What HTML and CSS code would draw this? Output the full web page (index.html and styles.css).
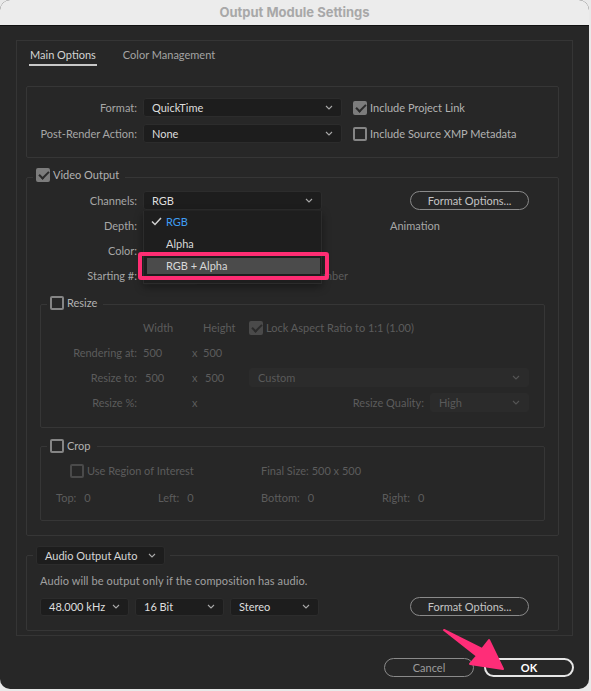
FILE: index.html
```html
<!DOCTYPE html>
<html lang="en">
<head>
  <meta charset="UTF-8">
  <title>Output Module Settings</title>
  <link rel="stylesheet" href="styles.css">
</head>
<body>
<div class="window">
  <div class="titlebar">Output Module Settings</div>
  <div class="content">
    <div class="panel">
      <div class="tabs">
        <span class="tab active">Main Options</span>
        <span class="tab">Color Management</span>
      </div>

      <!-- format -->
      <div class="box format-box">
        <span class="lbl">Format:</span>
        <div class="select">QuickTime<svg class="chev" width="8" height="5" viewBox="0 0 8 5"><path d="M1 1L4 4L7 1"/></svg></div>
        <label class="check"><span class="cb checked"></span>Include Project Link</label>
        <span class="lbl">Post-Render Action:</span>
        <div class="select">None<svg class="chev" width="8" height="5" viewBox="0 0 8 5"><path d="M1 1L4 4L7 1"/></svg></div>
        <label class="check"><span class="cb"></span>Include Source XMP Metadata</label>
      </div>

      <!-- video output -->
      <fieldset class="box video-box">
        <legend class="legend-lg"><label class="check"><span class="cb checked"></span>Video Output</label></legend>
        <div class="video-grid">
          <span class="lbl">Channels:</span>
          <div class="select">RGB<svg class="chev" width="8" height="5" viewBox="0 0 8 5"><path d="M1 1L4 4L7 1"/></svg></div>
          <div><button class="pill fmt-btn">Format Options...</button></div>

          <span class="lbl">Depth:</span>
          <div class="select"></div>
          <span class="codec">Animation</span>

          <span class="lbl">Color:</span>
          <div class="select"></div>
          <span></span>

          <span class="lbl">Starting #:</span>
          <div class="start-row">
            <span class="num-field"></span>
            <label class="check dim"><span class="cb checked"></span>Use Comp Frame Number</label>
          </div>
          <span></span>

          <div class="menu">
            <div class="item"><svg class="tick" width="11" height="9" viewBox="0 0 11 9"><path d="M1 4.5L4 7.5L10 1"/></svg><span class="sel">RGB</span></div>
            <div class="item">Alpha</div>
            <div class="item hover">RGB + Alpha</div>
          </div>
          <div class="mark"></div>
        </div>

        <fieldset class="box sub resize-box">
          <legend class="legend-sm"><label class="check"><span class="cb"></span>Resize</label></legend>
          <div class="resize-grid dim">
            <span></span><span>Width</span><span></span><span>Height</span>
            <label class="check"><span class="cb checked"></span>Lock Aspect Ratio to 1:1 (1.00)</label>

            <span class="lbl">Rendering at:</span><span>500</span><span>x</span><span>500</span><span></span>

            <span class="lbl">Resize to:</span><span class="pad">500</span><span>x</span><span class="pad">500</span>
            <div class="select off">Custom<svg class="chev" width="8" height="5" viewBox="0 0 8 5"><path d="M1 1L4 4L7 1"/></svg></div>

            <span class="lbl">Resize %:</span><span></span><span>x</span><span></span>
            <div class="quality">
              <span>Resize Quality:</span>
              <div class="select off q-select">High<svg class="chev" width="8" height="5" viewBox="0 0 8 5"><path d="M1 1L4 4L7 1"/></svg></div>
            </div>
          </div>
        </fieldset>

        <fieldset class="box sub crop-box">
          <legend class="legend-xs"><label class="check"><span class="cb"></span>Crop</label></legend>
          <div class="crop-grid dim">
            <label class="check roi"><span class="cb"></span>Use Region of Interest</label>
            <span class="final">Final Size: 500 x 500</span>
            <span>Top:<b>0</b></span>
            <span>Left:<b>0</b></span>
            <span>Bottom:<b>0</b></span>
            <span>Right:<b>0</b></span>
          </div>
        </fieldset>
      </fieldset>

      <!-- audio -->
      <fieldset class="box audio-box">
        <legend class="legend-audio">
          <div class="select audio-mode">Audio Output Auto<svg class="chev" width="8" height="5" viewBox="0 0 8 5"><path d="M1 1L4 4L7 1"/></svg></div>
        </legend>
        <p class="note">Audio will be output only if the composition has audio.</p>
        <div class="audio-row">
          <div class="select small">48.000 kHz<svg class="chev" width="8" height="5" viewBox="0 0 8 5"><path d="M1 1L4 4L7 1"/></svg></div>
          <div class="select small">16 Bit<svg class="chev" width="8" height="5" viewBox="0 0 8 5"><path d="M1 1L4 4L7 1"/></svg></div>
          <div class="select small">Stereo<svg class="chev" width="8" height="5" viewBox="0 0 8 5"><path d="M1 1L4 4L7 1"/></svg></div>
          <button class="pill fmt-btn audio-fmt">Format Options...</button>
        </div>
      </fieldset>
    </div>

    <div class="buttons">
      <button class="pill cancel">Cancel</button>
      <button class="pill ok">OK</button>
    </div>
  </div>

  <!-- annotation arrow -->
  <svg class="arrow" width="591" height="691" viewBox="0 0 591 691">
    <polygon points="444,630 482,649 489,640 503,669 470,664 477,656" fill="#ff2d78" stroke="#ff2d78" stroke-width="2" stroke-linejoin="round"/>
  </svg>
</div>
</body>
</html>
```

FILE: styles.css
```css
* {
  margin: 0;
  padding: 0;
  box-sizing: border-box;
}
html, body {
  height: 100%;
  background: #e9e9e9;
  font-family: Lato, "Liberation Sans", sans-serif;
  font-size: 11px;
  overflow: hidden;
}
.window {
  position: relative;
  width: 589px;
  height: 689px;
  background: #272727;
  border-radius: 10px;
  overflow: hidden;
}
.titlebar {
  height: 26px;
  background: #ececec;
  border-bottom: 1px solid #111;
  text-align: center;
  line-height: 24px;
  font-family: Inter, "Liberation Sans", sans-serif;
  font-weight: bold;
  font-size: 13px;
  color: #a8a8a8;
}
.content {
  padding: 14px 16px 0 16px;
}
.panel {
  border: 1px solid #353535;
  padding: 0 13px 4px 9px;
}
.tabs {
  display: flex;
  gap: 25px;
  padding: 7px 0 0 3px;
}
.tab {
  line-height: 14px;
  padding: 0 1px 2px;
  color: #a4a4a4;
}
.tab.active {
  color: #d4d4d4;
  border-bottom: 2px solid #c8c8c8;
}

.box {
  border: 1px solid #363636;
  border-radius: 2px;
}
fieldset.box {
  min-width: 0;
}
.lbl {
  text-align: right;
  color: #a6a6a6;
  white-space: nowrap;
}
.select {
  display: flex;
  align-items: center;
  justify-content: space-between;
  height: 19px;
  padding: 0 8px 0 8px;
  background: #1d1d1d;
  border: 1px solid #2c2c2c;
  border-radius: 3px;
  color: #dedede;
  white-space: nowrap;
}
.chev {
  fill: none;
  stroke: #a8a8a8;
  stroke-width: 1.1;
}
.check {
  display: flex;
  align-items: center;
  gap: 3px;
  color: #b2b2b2;
  white-space: nowrap;
}
.cb {
  position: relative;
  width: 14px;
  height: 14px;
  flex: none;
  border: 2px solid #858585;
  border-radius: 2px;
}
.cb.checked {
  background: #7c7c7c;
  border-color: #7c7c7c;
}
.cb.checked::after {
  content: "";
  position: absolute;
  left: 2.5px;
  top: -1px;
  width: 4px;
  height: 8px;
  border: solid #2b2b2b;
  border-width: 0 2px 2px 0;
  transform: rotate(45deg);
}
.pill {
  height: 19px;
  border: 1.5px solid #8a8a8a;
  border-radius: 10px;
  background: transparent;
  color: #c4c4c4;
  font-family: inherit;
  font-size: 11px;
}
.fmt-btn {
  width: 119px;
}

/* format */
.format-box {
  margin-top: 20px;
  padding: 11px 0 14px;
  display: grid;
  grid-template-columns: 110px 199px auto;
  column-gap: 6px;
  row-gap: 7px;
  align-items: center;
}
.format-box .check {
  margin-left: 5px;
}

/* video output */
.video-box {
  margin-top: 10px;
  padding: 5px 0 14px;
}
.legend-lg, .legend-sm, .legend-xs {
  margin-left: 6px;
  padding: 0 6px 0 3px;
}
.legend-lg { padding-bottom: 4px; }
.legend-sm { padding-bottom: 2px; }
.legend-lg .check, .legend-sm .check, .legend-xs .check {
  line-height: 14px;
}
.video-grid {
  position: relative;
  display: grid;
  grid-template-columns: 110px 179px 1fr;
  column-gap: 6px;
  row-gap: 6px;
  grid-auto-rows: 19px;
  align-items: center;
}
.video-grid .fmt-btn {
  margin-left: 82px;
}
.codec {
  margin-left: 62px;
  color: #a6a6a6;
}
.start-row {
  display: flex;
  align-items: center;
  gap: 8px;
}
.num-field {
  flex: none;
  width: 55px;
  height: 19px;
  background: #2b2b2b;
  border-radius: 3px;
}
.dim, .dim .check, .dim .lbl {
  color: #5c5c5c;
}
.dim .cb {
  border-color: #4a4a4a;
}
.dim .cb.checked {
  background: #4a4a4a;
}

.menu {
  position: absolute;
  left: 116px;
  top: 20px;
  width: 179px;
  display: flex;
  flex-direction: column;
  gap: 6px;
  padding: 3px 1px 9px 3px;
  background: #1e1e1e;
  border: 1px solid #2c2c2c;
  border-top: none;
  box-shadow: 0 3px 8px rgba(0, 0, 0, 0.4);
}
.menu .item {
  position: relative;
  height: 16px;
  padding-left: 19px;
  line-height: 16px;
  color: #d8d8d8;
}
.menu .item.hover {
  background: #4b4b4b;
}
.tick {
  position: absolute;
  left: 4px;
  top: 3px;
  fill: none;
  stroke: #d0d0d0;
  stroke-width: 1.5;
}
.sel {
  color: #3f9df3;
}
.mark {
  position: absolute;
  left: 111px;
  top: 61px;
  width: 191px;
  height: 28px;
  border: 4px solid #ff2d73;
  border-radius: 3px;
}

/* resize */
.sub {
  margin: 11px 13px 0;
}
.resize-box {
  padding: 6px 0 15px;
}
.resize-grid {
  display: grid;
  grid-template-columns: 102px 49px 11px 46px 280px;
  grid-auto-rows: 19px;
  row-gap: 6px;
  align-items: center;
}
.resize-grid .lbl {
  padding-right: 6px;
}
.resize-grid .pad {
  padding-left: 2px;
}
.select.off {
  background: #2b2b2b;
  border-color: #2b2b2b;
  color: #5a5a5a;
}
.select.off .chev {
  stroke: #555;
}
.quality {
  display: flex;
  justify-content: flex-end;
  align-items: center;
  gap: 6px;
}
.q-select {
  width: 99px;
}

/* crop */
.crop-box {
  padding: 8px 0 13px;
}
.crop-grid {
  display: grid;
  grid-template-columns: 102px 103px 121px 1fr;
  grid-auto-rows: 19px;
  row-gap: 8px;
  align-items: center;
  padding-left: 15px;
}
.roi {
  grid-column: 1 / 3;
  margin-left: 14px;
}
.final {
  grid-column: 3 / 5;
}
.crop-grid b {
  font-weight: normal;
  margin-left: 8px;
}

/* audio */
.audio-box {
  margin-top: 10px;
  padding: 9px 29px 14px 13px;
}
.legend-audio {
  margin-left: -7px;
  padding: 0 5px 0 3px;
}
.audio-mode {
  width: 129px;
  color: #d6d6d6;
}
.note {
  line-height: 14px;
  color: #a0a0a0;
  letter-spacing: 0.1px;
}
.audio-row {
  display: flex;
  align-items: center;
  gap: 6px;
  margin-top: 9px;
}
.select.small {
  width: 89px;
  height: 18px;
}
.audio-fmt {
  margin-left: auto;
}

/* bottom buttons */
.buttons {
  display: flex;
  justify-content: flex-end;
  gap: 10px;
  margin-top: 22px;
  margin-right: -1px;
}
.buttons .pill {
  width: 90px;
}
.cancel {
  color: #9c9c9c;
  border-color: #8a8a8a;
}
.ok {
  border: 2px solid #e6e6e6;
  color: #fff;
  font-weight: bold;
}
.arrow {
  position: absolute;
  left: 0;
  top: 0;
  pointer-events: none;
}
```
